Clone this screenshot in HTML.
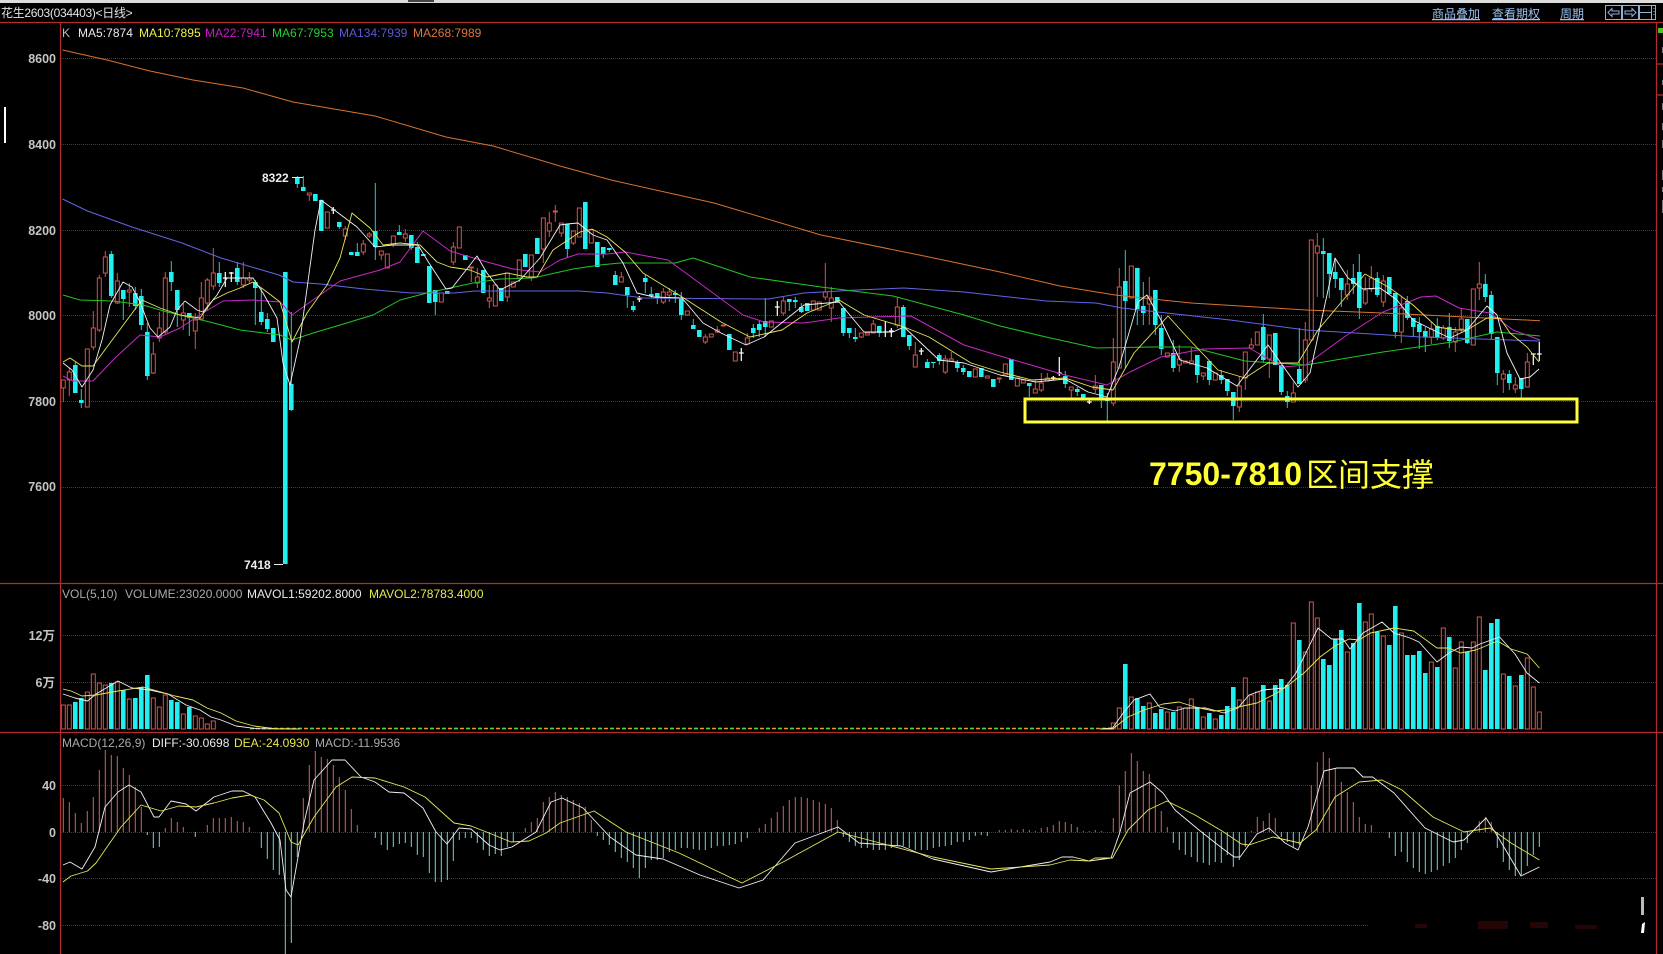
<!DOCTYPE html>
<html lang="zh"><head><meta charset="utf-8"><title>花生2603</title>
<style>
html,body{margin:0;padding:0;background:#000;width:1663px;height:954px;overflow:hidden}
svg{display:block}
text{font-family:"Liberation Sans","Noto Sans CJK SC",sans-serif;font-size:12px}
.n{vector-effect:non-scaling-stroke;fill:none}
.ax{font-weight:bold;fill:#c4c4c4;text-anchor:end;font-size:12.5px}
polyline{fill:none;stroke-linejoin:round}
</style></head><body>
<svg width="1663" height="954" viewBox="0 0 1663 954" xmlns="http://www.w3.org/2000/svg">
<rect width="1663" height="954" fill="#000"/>
<rect width="1663" height="3" fill="#dcdcdc"/>
<rect x="408" y="0" width="26" height="2" fill="#444"/>
<!-- grid -->
<g stroke="#8a1e1e" stroke-width="1" stroke-dasharray="1 1">
<path d="M61 58.5H1656M61 144.5H1656M61 230.5H1656M61 315.5H1656M61 401.5H1656M61 487.5H1656M61 635.5H1656M61 682.5H1656M61 785.5H1656M61 832.5H1656M61 878.5H1656M61 925.5H1368"/>
</g>
<!-- axes -->
<g stroke="#b22c2c" stroke-width="1.2">
<path d="M0 22.5H1663M0 583.5H1663M0 732.5H1663M60.5 22V954M1656.5 22V954M1656 64H1663M1656 95H1663"/>
</g>
<path d="M5 107V143" stroke="#fff" stroke-width="2"/>
<rect x="1658" y="28" width="5" height="5" fill="#4fc21e"/>
<path d="M1662.5 47V53M1662.5 80V85M1662.5 103V110M1662.5 123V130M1662.5 140V148M1662.5 170V180M1662.5 187V192M1662.5 200V213" stroke="#777" stroke-width="1"/>

<!-- candles: x = index -->
<g transform="translate(63.3 0) scale(6 1)">
<path class="n" stroke="#d8534c" stroke-width="1" d="M0 380V402M1 368V396M4 349V407M5 311V350M6 275V332M7 251V277M9 273V304M11 283V307M15 342V374M16 312V342M17 272V335M20 303V330M22 313V349M23 282V320M24 278V310M25 248V290M30 262V288M31 272V283M41 193V201M47 226V240M50 240V255M51 232V238M53 251V260M55 236V247M57 229V242M65 242V265M68 267V282M69 268V288M71 285V308M74 273V302M76 260V282M78 255V281M80 218V263M81 212V237M82 205V222M83 223V237M85 231V245M93 272V282M100 288V304M101 288V302M107 334V344M109 326V333M114 333V344M120 297V316M127 263V300M128 287V322M133 333V338M135 320V333M139 297V328M142 342V367M147 355V374M148 352V361M156 378V383M162 380V393M163 373V392M164 373V381M168 387V398M172 375V393M175 338V406M176 268V368M181 277V325M186 345V372M188 348V364M190 373V380M196 376V412M197 352V390M198 338V348M201 335V378M205 382V402M207 322V383M209 233V297M214 270V300M217 277V305M218 266V292M220 275V307M223 297V343M228 322V344M230 325V340M232 327V352M233 308V333M236 262V300M240 370V393M242 377V393M244 353V387"/>
<path class="n" stroke="#d8534c" stroke-width="1" fill="#000" style="fill:#000" d="M0 380h.33V388h-.66V380zM1 372h.33V380h-.66V372zM4 349h.33V407h-.66V349zM5 328h.33V347h-.66V328zM6 278h.33V330h-.66V278zM7 257h.33V273h-.66V257zM9 281h.33V303h-.66V281zM11 290h.33V292h-.66V290zM15 354h.33V373h-.66V354zM16 328h.33V338h-.66V328zM17 278h.33V332h-.66V278zM20 313h.33V320h-.66V313zM22 320h.33V331h-.66V320zM23 298h.33V319h-.66V298zM24 280h.33V303h-.66V280zM25 273h.33V286h-.66V273zM30 278h.33V285h-.66V278zM31 278h.33V280h-.66V278zM41 193h.33V195h-.66V193zM44 212h.33V228h-.66V212zM47 229h.33V236h-.66V229zM50 244h.33V252h-.66V244zM51 234h.33V236h-.66V234zM53 251h.33V255h-.66V251zM54 254h.33V268h-.66V254zM55 236h.33V245h-.66V236zM57 234h.33V238h-.66V234zM63 293h.33V302h-.66V293zM65 247h.33V262h-.66V247zM66 227h.33V248h-.66V227zM68 267h.33V268h-.66V267zM69 277h.33V283h-.66V277zM71 298h.33V301h-.66V298zM72 285h.33V306h-.66V285zM74 273h.33V297h-.66V273zM75 282h.33V287h-.66V282zM76 260h.33V278h-.66V260zM78 255h.33V278h-.66V255zM80 218h.33V249h-.66V218zM81 223h.33V231h-.66V223zM82 211h.33V212h-.66V211zM83 223h.33V233h-.66V223zM85 231h.33V243h-.66V231zM86 208h.33V237h-.66V208zM88 230h.33V243h-.66V230zM93 277h.33V282h-.66V277zM100 292h.33V302h-.66V292zM101 292h.33V295h-.66V292zM104 311h.33V315h-.66V311zM107 337h.33V342h-.66V337zM108 334h.33V337h-.66V334zM109 330h.33V332h-.66V330zM110 325h.33V326h-.66V325zM112 352h.33V361h-.66V352zM114 338h.33V344h-.66V338zM118 321h.33V327h-.66V321zM120 301h.33V313h-.66V301zM125 301h.33V310h-.66V301zM126 302h.33V310h-.66V302zM127 292h.33V297h-.66V292zM128 298h.33V308h-.66V298zM133 333h.33V337h-.66V333zM134 333h.33V335h-.66V333zM135 324h.33V333h-.66V324zM139 307h.33V325h-.66V307zM142 355h.33V367h-.66V355zM147 359h.33V372h-.66V359zM148 359h.33V361h-.66V359zM152 369h.33V377h-.66V369zM154 376h.33V378h-.66V376zM156 378h.33V379h-.66V378zM157 364h.33V375h-.66V364zM159 378h.33V386h-.66V378zM160 380h.33V383h-.66V380zM162 389h.33V393h-.66V389zM163 383h.33V390h-.66V383zM164 378h.33V381h-.66V378zM168 387h.33V390h-.66V387zM172 386h.33V389h-.66V386zM175 362h.33V403h-.66V362zM176 287h.33V368h-.66V287zM178 266h.33V298h-.66V266zM181 297h.33V304h-.66V297zM184 353h.33V357h-.66V353zM186 359h.33V365h-.66V359zM187 361h.33V363h-.66V361zM188 361h.33V364h-.66V361zM190 373h.33V376h-.66V373zM192 373h.33V380h-.66V373zM196 386h.33V407h-.66V386zM197 352h.33V378h-.66V352zM198 345h.33V348h-.66V345zM199 332h.33V345h-.66V332zM201 335h.33V359h-.66V335zM205 393h.33V402h-.66V393zM207 340h.33V380h-.66V340zM208 240h.33V340h-.66V240zM209 246h.33V253h-.66V246zM214 284h.33V295h-.66V284zM217 290h.33V303h-.66V290zM218 278h.33V289h-.66V278zM220 281h.33V302h-.66V281zM223 308h.33V332h-.66V308zM228 329h.33V337h-.66V329zM230 328h.33V338h-.66V328zM232 332h.33V342h-.66V332zM233 319h.33V329h-.66V319zM235 289h.33V345h-.66V289zM236 284h.33V288h-.66V284zM240 374h.33V379h-.66V374zM242 385h.33V389h-.66V385zM244 362h.33V387h-.66V362z"/>
<path class="n" stroke="#28c8cc" stroke-width="1" d="M2 362V393M3 389V408M8 251V298M10 290V320M12 287V310M13 289V330M14 323V380M18 261V291M19 290V327M21 313V336M26 262V287M29 262V285M32 280V325M33 288V325M34 313V332M38 312V411M39 176V188M40 176V191M46 222V229M49 243V256M52 183V260M56 225V235M58 235V250M59 242V263M62 290V315M84 224V258M90 247V258M91 248V252M92 271V285M94 287V308M95 301V312M97 275V293M98 287V298M99 293V304M102 290V303M103 292V320M105 319V329M115 324V338M116 321V337M117 298V337M121 299V311M122 297V308M123 303V313M130 308V336M131 328V338M132 328V342M136 326V337M140 305V337M141 335V350M144 359V368M145 362V368M146 353V365M149 360V372M150 365V375M161 383V397M167 371V388M169 387V396M170 394V400M173 385V408M174 393V421M177 250V368M179 268V325M180 282V325M182 290V335M183 315V355M185 340V372M189 355V383M191 361V385M193 370V384M194 379V396M195 392V420M200 314V362M203 365V395M204 391V408M206 328V384M210 238V298M211 253V298M212 258V288M213 278V307M215 264V294M216 254V319M219 272V297M222 293V338M224 296V320M225 318V337M226 317V349M227 327V352M229 318V340M231 313V348M234 319V344M237 274V302M238 291V340M239 337V385M241 370V390M243 378V398"/>
<path class="n" stroke="#22f0f0" stroke-width="4.6" d="M2 365V393M3 400V403M8 254V296M10 290V299M12 293V306M13 296V325M14 332V376M18 272V282M19 290V310M21 313V318M26 273V283M29 268V282M32 282V288M33 312V322M34 319V329M35 328V342M37 272V564M38 384V410M39 177V184M40 187V191M42 194V201M43 200V231M46 222V227M48 252V255M49 252V256M52 231V247M56 232V235M58 235V248M59 247V263M60 254V256M61 266V303M62 290V302M64 291V294M67 255V260M70 270V293M73 288V301M77 254V267M79 238V254M84 224V249M87 202V249M89 242V267M90 247V254M91 248V250M92 275V285M94 287V295M95 306V310M97 278V282M98 294V296M99 293V298M102 293V295M103 299V315M105 325V329M106 330V337M111 334V350M115 328V333M116 324V330M117 321V327M121 299V302M122 300V302M123 307V312M124 303V311M129 297V302M130 308V333M131 328V333M132 337V339M136 326V333M140 307V337M141 335V346M144 362V368M145 362V363M146 355V361M149 362V368M150 368V372M151 371V377M153 368V377M155 379V387M158 359V380M161 383V386M167 376V384M169 389V392M170 394V398M173 385V398M174 398V401M177 281V301M179 268V309M180 306V313M182 290V325M183 328V349M185 353V368M189 355V375M191 361V380M193 375V380M194 379V391M195 392V406M200 327V360M202 333V365M203 365V392M204 396V402M206 369V384M210 251V254M211 253V274M212 272V279M213 278V290M215 278V284M216 272V308M219 278V295M221 277V294M222 293V332M224 301V318M225 318V327M226 324V332M227 331V337M229 326V338M231 327V341M234 319V343M237 284V297M238 295V334M239 337V373M241 374V383M243 378V389"/>
<path class="n" stroke="#fff" stroke-width="1.2" d="M27 272V287M26.6 278h.8M28 272V282M27.6 273h.8M45 207V214M44.6 210h.8M96 296V302M95.6 299h.8M113 348V361M112.6 353h.8M119 301V316M118.6 307h.8M137 321V337M136.6 332h.8M138 328V337M137.6 331h.8M143 348V355M142.6 351h.8M165 376V380M164.6 378h.8M166 357V376M165.6 373h.8M171 400V404M170.6 402h.8M245 354V365M244.6 354h.8M246 342V361M245.6 354h.8"/>

<!-- volume bars -->
<path class="n" stroke="#d8534c" stroke-width="1" d="M0 705h.33V729h-.66V705zM1 705h.33V729h-.66V705zM4 692h.33V729h-.66V692zM5 674h.33V729h-.66V674zM6 683h.33V729h-.66V683zM7 685h.33V729h-.66V685zM9 682h.33V729h-.66V682zM11 699h.33V729h-.66V699zM15 698h.33V729h-.66V698zM16 707h.33V729h-.66V707zM17 695h.33V729h-.66V695zM20 714h.33V729h-.66V714zM22 716h.33V729h-.66V716zM23 718h.33V729h-.66V718zM24 724h.33V729h-.66V724zM25 721h.33V729h-.66V721zM175 723h.33V729h-.66V723zM176 708h.33V729h-.66V708zM178 697h.33V729h-.66V697zM181 703h.33V729h-.66V703zM184 712h.33V729h-.66V712zM186 707h.33V729h-.66V707zM187 708h.33V729h-.66V708zM188 699h.33V729h-.66V699zM190 717h.33V729h-.66V717zM192 719h.33V729h-.66V719zM196 700h.33V729h-.66V700zM197 678h.33V729h-.66V678zM198 695h.33V729h-.66V695zM199 692h.33V729h-.66V692zM201 701h.33V729h-.66V701zM205 623h.33V729h-.66V623zM207 652h.33V729h-.66V652zM208 602h.33V729h-.66V602zM209 618h.33V729h-.66V618zM214 652h.33V729h-.66V652zM217 622h.33V729h-.66V622zM218 614h.33V729h-.66V614zM220 636h.33V729h-.66V636zM223 633h.33V729h-.66V633zM228 662h.33V729h-.66V662zM230 628h.33V729h-.66V628zM232 668h.33V729h-.66V668zM233 642h.33V729h-.66V642zM235 642h.33V729h-.66V642zM236 617h.33V729h-.66V617zM240 674h.33V729h-.66V674zM242 686h.33V729h-.66V686zM244 658h.33V729h-.66V658zM245 687h.33V729h-.66V687zM246 712h.33V729h-.66V712z"/>
<path class="n" stroke="#22f0f0" stroke-width="4.6" d="M2 702V729M3 698V729M8 683V729M10 690V729M12 698V729M13 687V729M14 675V729M18 700V729M19 702V729M21 707V729M177 664V729M179 698V729M180 706V729M182 713V729M183 709V729M185 712V729M189 707V729M191 713V729M193 715V729M194 706V729M195 687V729M200 685V729M202 685V729M203 679V729M204 685V729M206 640V729M210 659V729M211 665V729M212 639V729M213 630V729M215 643V729M216 603V729M219 632V729M221 645V729M222 606V729M224 655V729M225 655V729M226 651V729M227 673V729M229 667V729M231 637V729M234 652V729M237 670V729M238 623V729M239 619V729M241 676V729M243 675V729"/>

<!-- MACD bars -->
<path class="n" stroke="#d8605a" stroke-width="1" d="M0 798V832M1 802V832M2 813V832M3 823V832M4 811V832M5 797V832M6 770V832M7 750V832M8 755V832M9 756V832M10 768V832M11 775V832M12 787V832M13 807V832M17 828V832M18 818V832M19 822V832M20 827V832M24 825V832M25 818V832M26 818V832M27 818V832M28 817V832M29 821V832M30 822V832M31 827V832M40 798V832M41 765V832M42 751V832M43 757V832M44 759V832M45 765V832M46 777V832M47 790V832M48 809V832M49 825V832M77 828V832M78 822V832M79 818V832M80 802V832M81 797V832M82 792V832M83 795V832M84 797V832M85 800V832M86 803V832M87 807V832M88 820V832M116 828V832M117 824V832M118 818V832M119 812V832M120 806V832M121 800V832M122 797V832M123 797V832M124 798V832M125 800V832M126 802V832M127 804V832M128 808V832M129 820V832M156 830V832M157 830V832M158 829V832M159 830V832M160 829V832M161 830V832M162 831V832M163 828V832M164 827V832M165 825V832M166 821V832M167 822V832M168 824V832M169 827V832M170 831V832M171 831V832M172 830V832M173 831V832M175 818V832M176 785V832M177 771V832M178 753V832M179 761V832M180 771V832M181 774V832M182 788V832M183 811V832M184 827V832M198 831V832M199 817V832M200 821V832M201 813V832M202 818V832M207 831V832M208 785V832M209 762V832M210 752V832M211 758V832M212 768V832M213 782V832M214 792V832M215 802V832M216 817V832M217 824V832M218 825V832M236 821V832M237 817V832M238 822V832"/>
<path class="n" stroke="#6fd6d8" stroke-width="1" d="M14 832V835M15 832V848M16 832V847M22 832V837M33 832V848M34 832V859M35 832V870M36 832V875M37 832V954M38 832V943M39 832V857M52 832V838M53 832V845M54 832V850M55 832V847M56 832V844M57 832V843M58 832V847M59 832V855M60 832V857M61 832V873M62 832V882M63 832V882M64 832V880M65 832V861M66 832V840M67 832V838M68 832V838M69 832V843M70 832V850M71 832V856M72 832V854M73 832V856M74 832V847M75 832V842M89 832V836M90 832V840M91 832V845M92 832V852M93 832V858M94 832V862M95 832V868M96 832V878M97 832V868M98 832V860M99 832V860M100 832V858M101 832V852M102 832V850M103 832V848M104 832V848M105 832V849M106 832V850M107 832V850M108 832V848M109 832V846M110 832V846M111 832V845M112 832V844M113 832V842M114 832V838M130 832V837M131 832V842M132 832V846M133 832V848M134 832V848M135 832V850M136 832V850M137 832V850M138 832V848M139 832V846M140 832V846M141 832V848M142 832V850M143 832V850M144 832V850M145 832V848M146 832V847M147 832V846M148 832V845M149 832V842M150 832V842M151 832V840M152 832V836M153 832V835M154 832V836M185 832V843M186 832V850M187 832V855M188 832V857M189 832V862M190 832V863M191 832V865M192 832V862M193 832V863M194 832V855M195 832V867M196 832V860M197 832V847M203 832V837M204 832V842M205 832V847M206 832V845M221 832V838M222 832V856M223 832V852M224 832V862M225 832V868M226 832V872M227 832V874M228 832V872M229 832V870M230 832V866M231 832V863M232 832V858M233 832V850M234 832V843M239 832V848M240 832V862M241 832V870M242 832V876M243 832V875M244 832V866M245 832V855M246 832V847"/>
</g>

<!-- volume baseline -->
<path d="M250 728.5H1113" stroke="#e89a28" stroke-width="1.5" stroke-dasharray="4 2"/>
<path d="M250 728.5H1113" stroke="#49d63a" stroke-width="1.5" stroke-dasharray="3 9"/>

<!-- MAs -->
<g stroke-width=".9">
<polyline stroke="#d9722e" stroke-width="1" points="62.5,50 107,60 150,71 193,80 243,88 293,102 375,116 446,137 493,146 560,166 611,180 714,203 821,235 929,257 1000,272 1060,286 1115,295 1191,303 1306,310 1383,313 1540,320.7"/>
<polyline stroke="#6464e6" stroke-width="1" points="62.5,199 87.5,211 132,227 182,243 221,258 279,275 293,282 321,284 364,289 411,293 454,293 475,291 560,291 579,291 607,293 643,298 768,299 804,293 857,290 904,288 964,292 1000,296 1046,301 1096,303 1122,308 1230,320 1306,330 1421,337 1540,341"/>
<polyline stroke="#22c522" stroke-width="1" points="63,295 80,300 113,301 143,305 167,312 210,322 240,330 280,335 292,340 313,333 340,325 373,315 400,300 427,293 473,283 500,279 533,278 573,269 600,265 620,263 675,263 693,258 750,277 821,287 893,296 964,315 1000,326 1046,337 1096,348 1153,347 1191,347 1245,361 1306,365 1383,352 1452,342 1497,332 1540,336"/>
<polyline stroke="#c828c8" stroke-width="1" points="63,376 73,381 93,381 115,358 140,335 160,337 180,328 203,313 223,301 253,300 280,302 292,315 320,295 340,281 380,270 400,262 423,231 450,251 487,262 513,269 540,272 560,260 578,254 607,254 625,252 668,260 743,315 764,322 804,323 839,318 871,317 911,316 964,345 1000,356 1031,365 1065,375 1107,385 1130,372 1161,357 1203,349 1249,348 1283,367 1306,365 1344,337 1383,312 1421,297 1436,296 1459,308 1490,313 1513,330 1540,340"/>
<polyline stroke="#e8e85a" points="63,362 70,358 82,366 93,366 110,343 127,320 142,300 160,308 180,315 200,318 213,300 227,293 240,288 253,282 267,292 280,302 292,342 307,313 327,285 340,258 352,213 370,228 383,245 400,243 420,245 437,262 450,267 470,270 487,277 507,273 527,277 537,277 553,250 580,232 592,229 607,237 625,252 643,273 679,295 721,322 750,337 782,330 807,313 839,300 864,315 904,327 929,337 971,363 1000,372 1032,380 1065,378 1092,387 1113,390 1134,353 1168,316 1187,337 1218,370 1245,378 1268,363 1298,363 1318,330 1365,274 1390,288 1413,305 1437,327 1457,330 1467,330 1487,318 1500,318 1510,333 1527,347 1539,362"/>
<polyline stroke="#f2f2f2" points="63,363 72,370 82,387 93,370 102,340 110,305 123,282 132,287 140,302 150,328 158,337 170,327 177,310 185,301 197,310 203,312 217,295 227,278 253,278 263,293 277,318 283,363 290,385 300,340 315,230 321,200 357,227 375,247 393,245 418,245 429,263 446,289 452,288 477,256 487,273 500,290 520,280 540,258 560,225 567,224 578,223 593,235 607,240 623,263 637,293 654,297 682,298 703,323 721,333 746,345 764,337 804,305 839,302 864,332 893,332 904,327 921,343 939,360 964,363 1000,375 1036,382 1065,379 1088,392 1107,397 1119,367 1138,302 1147,295 1161,320 1180,360 1207,368 1237,386 1268,345 1298,387 1310,373 1335,258 1348,278 1363,289 1380,288 1397,300 1413,320 1433,330 1450,338 1467,330 1487,306 1497,315 1507,353 1520,379 1530,377 1539,369"/>

<!-- volume MA -->
<polyline stroke="#f2f2f2" points="63,694 75,698 87.5,701 96,694 118,681 132,688 150,690 168,694 186,705 200,710 211,717 221,720 236,726 257,728.7 300,729"/>
<polyline stroke="#e8e85a" points="63,689 71,691 82,696 96,695 118,691 143,687 161,692 175,696 193,700 207,708 221,713 236,721 254,726 275,728.7 300,729"/>
<polyline stroke="#f2f2f2" points="1100,729 1112.5,728 1124,712 1134,700 1150,694 1159.5,707 1175,711 1185,708 1206,708 1224,713 1238,708 1249,695 1263,690 1284.6,688 1296,673 1318,628 1331.5,639 1343,639 1350,649 1363,633 1382,622 1394,633 1410,638 1419,642 1437,662 1449,653 1460.5,647 1472,648 1480,644 1499.6,637 1515,654 1527,673 1539.4,683"/>
<polyline stroke="#e8e85a" points="1100,729 1112.5,729 1128,717 1144,710 1163,704 1179,702 1195,707 1214,711 1226,710 1238,707 1257,703 1277,693 1288.5,685 1304,673 1320,657 1335,646 1349,639 1359,640 1370.6,633 1394,628 1413.6,631 1437,648 1449,648 1460.5,653 1476,650 1497.6,641 1511,649 1527,654 1539.4,668"/>

<!-- MACD lines -->
<polyline stroke="#f2f2f2" points="63,865 70,862 82,869 95,847 105,807 118,792 129,785 141,792 154,817 159,817 171,801 186,804 196,811 214,797 232,791 243,791 255,797 271,823 280,840 286,890 291,897 304,823 314,780 332,760 345,760 361,777 375,782 389,792 404,793 423,808 436,832 447,844 459,828 471,829 489,845 500,850 512,847 536,832 551,802 562,798 583,808 610,837 636,855 663,859 700,875 739,888 763,880 795,843 838,827 859,843 901,846 933,859 991,872 1050,862 1062,857 1073,857 1089,861 1111,858 1120,832 1130,793 1150,782 1163,793 1175,810 1199,830 1218,845 1234,857 1240,857 1257,834 1269,828 1285,843 1298,850 1308,827 1324,771 1337,768 1354,768 1363,777 1372.5,777 1394,793 1425,828 1453,842 1464,840 1486,818 1498,837 1521,876 1539.4,867"/>
<polyline stroke="#e8e85a" points="63,882 71,876 87.5,871 96,863 107,847 121,827 141,805 161,811 179,806 196,807 214,803 232,798 250,795 264,800 279,813 291,842 298,845 314,817 336,787 352,777 375,778 404,787 425,797 454,823 471,826 489,833 511,842 529,841 546,833 560,823 594,811 626,832 679,853 742,883 785,861 838,832 880,843 933,857 991,869 1050,865 1070,860 1089,861 1095,858 1112.5,858 1128,830 1148,810 1167,801 1195,815 1222,831 1241.5,844 1249,845 1273,837 1300,843 1316,830 1335,797 1359,782 1382,780 1402,790 1433,817 1464,832 1490,828 1511,843 1539.4,860"/>
</g>

<!-- yellow box -->
<rect x="1025" y="399" width="552" height="23" fill="none" stroke="#ffff3c" stroke-width="3"/>
<text x="1149" y="485" font-weight="bold" fill="#ffff33" style="font-size:32px">7750-7810</text>
<text x="1306" y="486" fill="#ffff33" style="font-size:32px;font-family:'Noto Sans CJK SC',sans-serif;font-weight:400">区间支撑</text>

<!-- header -->
<text x="1" y="17" fill="#e4e4e4" style="font-size:12px;letter-spacing:-.3px">花生2603(034403)&lt;日线&gt;</text>
<text x="1432" y="18" fill="#9cc2ee" text-decoration="underline">商品叠加</text>
<text x="1492" y="18" fill="#9cc2ee" text-decoration="underline">查看期权</text>
<text x="1560" y="18" fill="#9cc2ee" text-decoration="underline">周期</text>
<g fill="none" stroke="#8fb0d8" stroke-width="1">
<rect x="1605.5" y="5.5" width="16" height="14"/>
<rect x="1622.5" y="5.5" width="16" height="14"/>
<rect x="1639.5" y="5.5" width="16" height="14"/>
<path d="M1608 12.5l4-4v2.5h7v3h-7v2.5zM1636 12.5l-4-4v2.5h-7v3h7v2.5zM1640 12.5h12M1651.5 6V19M1654 8v1M1654 11v1M1654 14v1"/>
</g>

<!-- legends -->
<g style="letter-spacing:.03px">
<text x="62" y="37" fill="#bbb">K</text>
<text x="78" y="37" fill="#ececec">MA5:7874</text>
<text x="139" y="37" fill="#f0f050">MA10:7895</text>
<text x="205" y="37" fill="#cc18cc">MA22:7941</text>
<text x="272" y="37" fill="#20d030">MA67:7953</text>
<text x="339" y="37" fill="#5a5ad8">MA134:7939</text>
<text x="413" y="37" fill="#e0763a">MA268:7989</text>
</g>

<text x="62" y="598" fill="#aaa">VOL(5,10)</text>
<text x="125" y="598" fill="#aaa">VOLUME:23020.0000</text>
<text x="247" y="598" fill="#ececec">MAVOL1:59202.8000</text>
<text x="369" y="598" fill="#e8e850">MAVOL2:78783.4000</text>

<text x="62" y="747" fill="#aaa">MACD(12,26,9)</text>
<text x="152" y="747" fill="#ececec">DIFF:-30.0698</text>
<text x="234" y="747" fill="#e8e850">DEA:-24.0930</text>
<text x="315" y="747" fill="#aaa">MACD:-11.9536</text>

<!-- axis labels -->
<text class="ax" x="56" y="63">8600</text>
<text class="ax" x="56" y="149">8400</text>
<text class="ax" x="56" y="235">8200</text>
<text class="ax" x="56" y="320">8000</text>
<text class="ax" x="56" y="406">7800</text>
<text class="ax" x="56" y="491">7600</text>
<text class="ax" x="55" y="640">12万</text>
<text class="ax" x="55" y="687">6万</text>
<text class="ax" x="56" y="790">40</text>
<text class="ax" x="56" y="837">0</text>
<text class="ax" x="56" y="883">-40</text>
<text class="ax" x="56" y="930">-80</text>

<!-- high/low labels -->
<text x="262" y="182" fill="#eee" font-weight="bold">8322</text>
<path d="M292 177.5H303" stroke="#eee" stroke-width="1"/>
<text x="244" y="569" fill="#eee" font-weight="bold">7418</text>
<path d="M274 564.5H283" stroke="#eee" stroke-width="1"/>

<!-- bottom right remnants -->
<rect x="1641" y="897" width="3" height="18" fill="#bbb"/>
<path d="M1645 922l-1 11h-3l1-9z" fill="#fff"/>
<g fill="#240606">
<rect x="1478" y="921" width="30" height="8"/><rect x="1415" y="924" width="12" height="4"/><rect x="1530" y="922" width="18" height="6"/><rect x="1575" y="925" width="22" height="4"/>
</g>
</svg>
</body></html>
